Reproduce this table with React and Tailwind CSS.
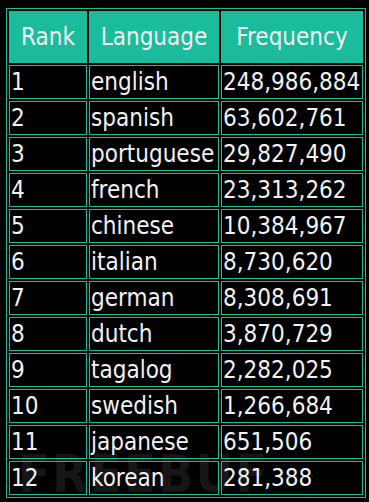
import React from "react";

const rows = [
  ["1", "english", "248,986,884"],
  ["2", "spanish", "63,602,761"],
  ["3", "portuguese", "29,827,490"],
  ["4", "french", "23,313,262"],
  ["5", "chinese", "10,384,967"],
  ["6", "italian", "8,730,620"],
  ["7", "german", "8,308,691"],
  ["8", "dutch", "3,870,729"],
  ["9", "tagalog", "2,282,025"],
  ["10", "swedish", "1,266,684"],
  ["11", "japanese", "651,506"],
  ["12", "korean", "281,388"],
];

export default function App() {
  return (
    <div
      className="relative w-[369px] h-[502px] bg-black overflow-hidden pt-[8px] pl-[6px]"
      style={{ fontFamily: '"DejaVu Sans Condensed", "DejaVu Sans", sans-serif' }}
    >
      <div className="absolute left-[18px] top-[448px] text-[52px] font-bold leading-none text-[#161616] tracking-[2px] select-none">
        FREEBUF
      </div>
      <table className="relative border border-[#1abc9c] border-separate border-spacing-[2px] text-[24px] text-[#f2f2f2]">
        <thead>
          <tr>
            <th className="w-[78px] h-[52px] p-0 bg-[#1abc9c] font-normal text-center">Rank</th>
            <th className="w-[130px] h-[52px] p-0 bg-[#1abc9c] font-normal text-center">Language</th>
            <th className="w-[142px] h-[52px] p-0 bg-[#1abc9c] font-normal text-center">Frequency</th>
          </tr>
        </thead>
        <tbody>
          {rows.map((r) => (
            <tr key={r[0]}>
              {r.map((c, i) => (
                <td
                  key={i}
                  className="h-[34px] px-[1px] py-0 border border-[#1abc9c] whitespace-nowrap leading-none align-middle"
                >
                  {c}
                </td>
              ))}
            </tr>
          ))}
        </tbody>
      </table>
    </div>
  );
}
